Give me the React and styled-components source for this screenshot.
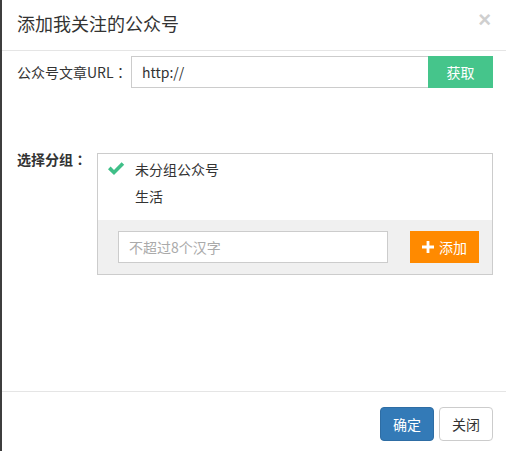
import React from 'react';
import styled, { createGlobalStyle } from 'styled-components';

// ─────────────────────────────────────────────────────────────────────────────
// Global
// ─────────────────────────────────────────────────────────────────────────────

const GlobalStyle = createGlobalStyle`
  html, body {
    margin: 0;
    padding: 0;
    background: #fff;
  }
  body {
    font-family: "Microsoft YaHei", "Noto Sans CJK SC", "Liberation Sans", sans-serif;
    font-size: 14px;
    color: #333;
  }
  * {
    box-sizing: border-box;
  }
`;

// ─────────────────────────────────────────────────────────────────────────────
// Icons
// ─────────────────────────────────────────────────────────────────────────────

const CheckIcon = () => (
  <svg width="18" height="15" viewBox="0 0 18 15">
    <path d="M1 8.2 L3.6 5.6 L7 9 L14.6 1.2 L17.2 3.8 L7 14 Z" fill="#3fbf88" />
  </svg>
);

const PlusIcon = () => (
  <svg width="12" height="12" viewBox="0 0 12 12">
    <path d="M4.6 0h2.8v4.6H12v2.8H7.4V12H4.6V7.4H0V4.6h4.6z" fill="#fff" />
  </svg>
);

// ─────────────────────────────────────────────────────────────────────────────
// Component
// ─────────────────────────────────────────────────────────────────────────────

const groups = [
  { name: '未分组公众号', checked: true },
  { name: '生活', checked: false },
];

const App = () => (
  <>
    <GlobalStyle />
    <Modal>
      <Header>
        <Title>添加我关注的公众号</Title>
        <Close>×</Close>
      </Header>
      <Body>
        <FormRow>
          <Label width={114}>
            公众号文章URL<Colon>：</Colon>
          </Label>
          <UrlInput defaultValue="http://" />
          <FetchButton>获取</FetchButton>
        </FormRow>
        <FormRow top={65}>
          <Label width={80} bold>
            选择分组<Colon>：</Colon>
          </Label>
          <GroupBox>
            <GroupList>
              {groups.map(({ name, checked }) => (
                <GroupItem key={name}>
                  <CheckSlot>{checked && <CheckIcon />}</CheckSlot>
                  {name}
                </GroupItem>
              ))}
            </GroupList>
            <AddBar>
              <GroupInput placeholder="不超过8个汉字" />
              <AddButton>
                <PlusIcon />
                添加
              </AddButton>
            </AddBar>
          </GroupBox>
        </FormRow>
      </Body>
      <Footer>
        <Button primary>确定</Button>
        <Button>关闭</Button>
      </Footer>
    </Modal>
  </>
);

// ─────────────────────────────────────────────────────────────────────────────
// Styles
// ─────────────────────────────────────────────────────────────────────────────

const Modal = styled.div`
  width: 506px;
  height: 451px;
  border-left: 2px solid #3d3d3d;
  background: #fff;
  display: flex;
  flex-direction: column;
`;

const Header = styled.div`
  height: 51px;
  padding: 0 15px 0 15px;
  border-bottom: 1px solid #e5e5e5;
  display: flex;
  align-items: center;
  justify-content: space-between;
`;

const Title = styled.h4`
  margin: 0;
  font-size: 18px;
  font-weight: normal;
  color: #333;
  line-height: 1;
  padding-bottom: 4px;
`;

const Close = styled.span`
  font-family: "Liberation Sans", sans-serif;
  font-size: 22px;
  font-weight: bold;
  color: #cfcfcf;
  line-height: 1;
  padding-bottom: 10px;
`;

const Body = styled.div`
  height: 340px;
  padding: 5px 13px 0 15px;
`;

const FormRow = styled.div`
  display: flex;
  align-items: flex-start;
  margin-top: ${({ top }) => top || 0}px;
`;

const Label = styled.label`
  flex: none;
  width: ${({ width }) => width}px;
  font-size: 14px;
  font-weight: ${({ bold }) => (bold ? 'bold' : 'normal')};
  line-height: ${({ bold }) => (bold ? '12px' : '32px')};
  color: #333;
`;

const Colon = styled.span`
  font-family: "Noto Sans CJK TC", "Noto Sans CJK SC", sans-serif;
`;

const UrlInput = styled.input`
  width: 297px;
  height: 32px;
  border: 1px solid #ccc;
  border-right: none;
  padding: 0 10px;
  font: inherit;
  font-size: 14px;
  color: #333;
  outline: none;
`;

const FetchButton = styled.button`
  width: 65px;
  height: 32px;
  border: none;
  background: #45c58b;
  color: #fff;
  font: inherit;
  font-size: 14px;
  cursor: pointer;
`;

const GroupBox = styled.div`
  width: 396px;
  border: 1px solid #ccc;
`;

const GroupList = styled.ul`
  list-style: none;
  margin: 0;
  padding: 1px 0 11px;
`;

const GroupItem = styled.li`
  height: 27px;
  display: flex;
  align-items: center;
  padding-left: 9px;
  font-size: 14px;
  color: #333;
`;

const CheckSlot = styled.span`
  width: 28px;
  display: flex;
  align-items: center;
`;

const AddBar = styled.div`
  background: #f0f0f0;
  padding: 11px 13px 11px 20px;
  display: flex;
  align-items: center;
  justify-content: space-between;
`;

const GroupInput = styled.input`
  width: 270px;
  height: 32px;
  border: 1px solid #ccc;
  background: #fff;
  padding: 0 10px;
  font: inherit;
  font-size: 14px;
  outline: none;
  &::placeholder {
    color: #aaa;
  }
`;

const AddButton = styled.button`
  width: 69px;
  height: 32px;
  border: none;
  background: #ff8a00;
  color: #fff;
  font: inherit;
  font-size: 14px;
  display: flex;
  align-items: center;
  justify-content: center;
  gap: 5px;
  cursor: pointer;
`;

const Footer = styled.div`
  border-top: 1px solid #e5e5e5;
  padding: 15px 13px 0 0;
  display: flex;
  justify-content: flex-end;
  gap: 5px;
`;

const Button = styled.button`
  width: 54px;
  height: 34px;
  border-radius: 4px;
  border: 1px solid ${({ primary }) => (primary ? '#2e6da4' : '#ccc')};
  background: ${({ primary }) => (primary ? '#337ab7' : '#fff')};
  color: ${({ primary }) => (primary ? '#fff' : '#333')};
  font: inherit;
  font-size: 14px;
  cursor: pointer;
`;

export default App;
